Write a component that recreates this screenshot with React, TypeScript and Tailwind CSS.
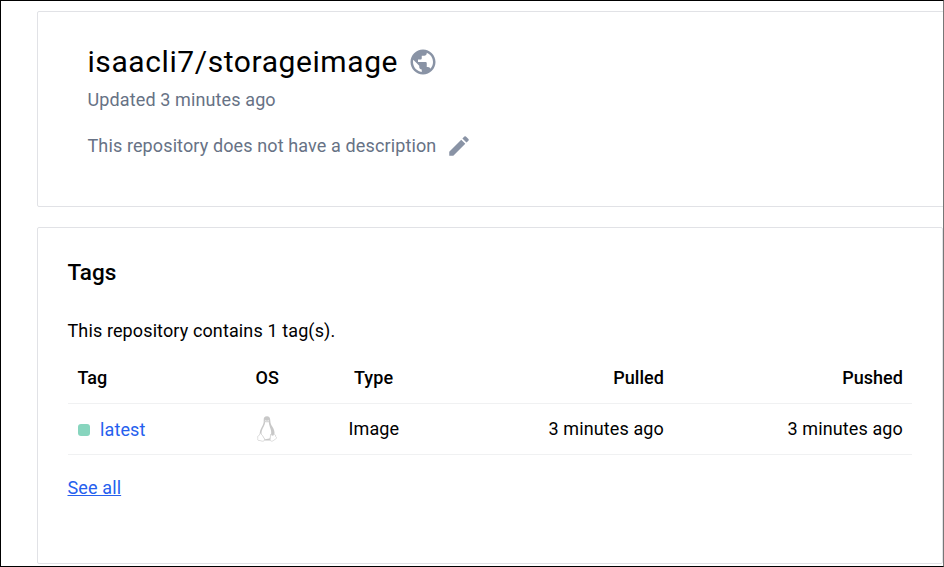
import { MdPublic, MdEdit } from "react-icons/md";

function Penguin() {
  return (
    <svg viewBox="0 0 20 26" className="ml-[11px] h-[26px] w-5" fill="none">
      <path d="M10 .3c-2.4 0-3.5 1.5-3.3 4 .2 3-.5 4.2-2 7C3.500 13.500 2.600 15.500 2.800 18L6 24.500h7l4.400-6c.5-2.500-.5-5.500-2-7.700-1.500-2.300-2-3.500-2.100-6.300C13.200 1.700 12.100.3 10 .3Z" fill="#c8c8c8" />
      <path d="M8 6.200c.8-.7 2.500-.8 3.800 0 .2 2.500 1 4.300 1.700 6.500.7 2.300.9 4 .5 5.700L12.500 22.500 8 23.200 4.500 18c-.2-2.500.8-4.800 2.100-7.200C7.500 8.700 8 7.900 8 6.200Z" fill="#fff" />
      <path d="M7.900 4.200 10 5.200l2-1M7.700 5.700l2.200 1 1.900-1" stroke="#eeeeee" strokeWidth=".8" />
      <path d="m3.400 17.200 2.100 2.400 2 3.300c.3 1.500-.7 2.600-2.400 2.300-1.300-.6-2.600-.8-4-.9-.7-.3-.4-1.500-.3-2.400-.5-1.500-.2-1.900 1-2.100Z" fill="#fff" stroke="#d4d4d4" strokeWidth=".8" />
      <path d="m13.600 18.100 1.200 1.200c1 .4 2-.2 2.600-1l1.100.8.100 1.400 1.200 1.200c-.1 1-1.700 1.300-3 2.600-1.500 1.300-3.200 1.200-3.700-.3Z" fill="#fff" stroke="#d4d4d4" strokeWidth=".8" />
    </svg>
  );
}

export default function App() {
  return (
    <div className="h-[567px] w-[944px] overflow-hidden border border-black border-r-[#777777] bg-white pl-9 pt-[10px] font-[Roboto,sans-serif] text-[18px] leading-6 tracking-[0.12px] text-black">
      <section className="h-[196px] w-[910px] rounded-[2px] border border-[#e1e2e6] pl-[49.5px] pt-[30px] text-[#677285]">
        <div className="flex items-center">
          <h1 className="text-[30px] leading-10 tracking-[0.58px] text-black">isaacli7/storageimage</h1>
          <MdPublic className="ml-[9.500px] size-[30px] text-[#8993a5]" />
        </div>
        <p className="mt-[6px]">Updated 3 minutes ago</p>
        <div className="mt-[21px] flex items-center">
          <p className="leading-[26px]">This repository does not have a description</p>
          <MdEdit className="ml-[9.500px] size-[26px] text-[#8993a5]" />
        </div>
      </section>
      <section className="mt-5 h-[337px] w-[906px] rounded-[2px] border border-[#e1e2e6] px-[29.5px] pt-[30px]">
        <h2 className="text-[22.500px] font-medium leading-7 tracking-normal">Tags</h2>
        <p className="mt-[33px]">This repository contains 1 tag(s).</p>
        <table className="mt-[9px] w-[844px] table-fixed border-collapse">
          <thead>
            <tr className="h-[51px] border-b border-[#f0f1f2] tracking-[0.05px]">
              <th className="w-[178px] pl-[10px] pt-[2px] text-left font-medium">Tag</th>
              <th className="w-[93px] pl-[10px] pt-[2px] text-left font-medium">OS</th>
              <th className="w-[150px] pl-[15.500px] pt-[2px] text-left font-medium">Type</th>
              <th className="w-[175.500px] pt-[2px] text-right font-medium">Pulled</th>
              <th className="pr-[8.500px] pt-[2px] text-right font-medium">Pushed</th>
            </tr>
          </thead>
          <tbody>
            <tr className="h-[51px] border-b border-[#f0f1f2]">
              <td className="pl-[10px] pt-[2px] text-[#2560ee]">
                <span className="mr-[10.500px] inline-block size-3 rounded-[3px] bg-[#87d5be]" />
                latest
              </td>
              <td><Penguin /></td>
              <td className="pl-[10px]">Image</td>
              <td className="text-right">3 minutes ago</td>
              <td className="pr-[8.500px] text-right">3 minutes ago</td>
            </tr>
          </tbody>
        </table>
        <a className="mt-[21px] inline-block text-[#2560ee] underline">See all</a>
      </section>
    </div>
  );
}
